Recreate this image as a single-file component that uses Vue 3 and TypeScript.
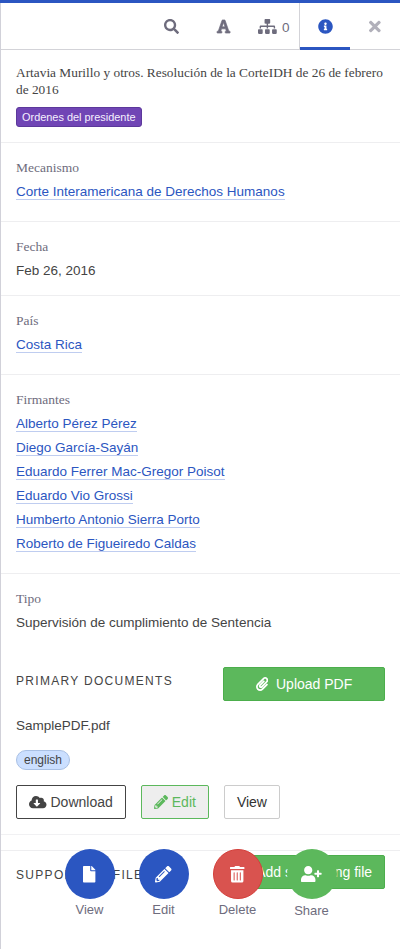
<script setup lang="ts">
interface Icon {
  width: number
  path: string
}

interface Property {
  label: string
  values: string[]
  linked: boolean
}

interface Action {
  label: string
  icon: string
  tone: string
}

const icons: Record<string, Icon> = {
  search: { width: 512, path: 'M505 442.7L405.3 343c-4.5-4.5-10.6-7-17-7H372c27.6-35.3 44-79.7 44-128C416 93.1 322.9 0 208 0S0 93.1 0 208s93.1 208 208 208c48.3 0 92.7-16.4 128-44v16.3c0 6.4 2.5 12.5 7 17l99.7 99.7c9.4 9.4 24.6 9.4 33.9 0l28.3-28.3c9.4-9.4 9.4-24.6.1-34zM208 336c-70.7 0-128-57.2-128-128 0-70.7 57.2-128 128-128 70.7 0 128 57.2 128 128 0 70.7-57.2 128-128 128z' },
  font: { width: 448, path: 'M432 416h-26.7L275.5 42.7c-2.2-6.4-8.3-10.7-15.1-10.7h-72.8c-6.8 0-12.9 4.3-15.1 10.7L42.7 416H16c-8.8 0-16 7.2-16 16v32c0 8.8 7.2 16 16 16h136c8.8 0 16-7.2 16-16v-32c0-8.8-7.2-16-16-16h-24l26.1-80h139.8l26.1 80h-24c-8.8 0-16 7.2-16 16v32c0 8.8 7.2 16 16 16h136c8.8 0 16-7.2 16-16v-32c0-8.8-7.2-16-16-16zM174.4 268.3l42-124.1c4.3-15.2 6.6-28.2 7.6-34.6.8 6.5 2.9 19.5 7.7 34.7l41.3 124H174.4z' },
  sitemap: { width: 640, path: 'M128 352H32c-17.67 0-32 14.33-32 32v96c0 17.67 14.33 32 32 32h96c17.67 0 32-14.33 32-32v-96c0-17.67-14.33-32-32-32zm-24-80h192v48h48v-48h192v48h48v-57.59c0-21.17-17.23-38.41-38.41-38.41H344v-64h40c17.67 0 32-14.33 32-32V32c0-17.67-14.33-32-32-32H256c-17.67 0-32 14.33-32 32v96c0 17.67 14.33 32 32 32h40v64H94.41C73.23 224 56 241.23 56 262.41V320h48v-48zm264 80h-96c-17.67 0-32 14.33-32 32v96c0 17.67 14.33 32 32 32h96c17.67 0 32-14.33 32-32v-96c0-17.67-14.33-32-32-32zm240 0h-96c-17.67 0-32 14.33-32 32v96c0 17.67 14.33 32 32 32h96c17.67 0 32-14.33 32-32v-96c0-17.67-14.33-32-32-32z' },
  info: { width: 512, path: 'M256 8C119.043 8 8 119.083 8 256c0 136.997 111.043 248 248 248s248-111.003 248-248C504 119.083 392.957 8 256 8zm0 110c23.196 0 42 18.804 42 42s-18.804 42-42 42-42-18.804-42-42 18.804-42 42-42zm56 254c0 6.627-5.373 12-12 12h-88c-6.627 0-12-5.373-12-12v-24c0-6.627 5.373-12 12-12h12v-64h-12c-6.627 0-12-5.373-12-12v-24c0-6.627 5.373-12 12-12h64c6.627 0 12 5.373 12 12v100h12c6.627 0 12 5.373 12 12v24z' },
  times: { width: 352, path: 'M242.72 256l100.07-100.07c12.28-12.28 12.28-32.19 0-44.48l-22.24-22.24c-12.28-12.28-32.19-12.28-44.48 0L176 189.28 75.93 89.21c-12.28-12.28-32.19-12.28-44.48 0L9.21 111.45c-12.28 12.28-12.28 32.19 0 44.48L109.28 256 9.21 356.07c-12.28 12.28-12.28 32.19 0 44.48l22.24 22.24c12.28 12.28 32.2 12.28 44.48 0L176 322.72l100.07 100.07c12.28 12.28 32.2 12.28 44.48 0l22.24-22.24c12.28-12.28 12.28-32.19 0-44.48L242.72 256z' },
  paperclip: { width: 448, path: 'M43.246 466.142c-58.43-60.289-57.341-157.511 1.386-217.581L254.392 34c44.316-45.332 116.351-45.336 160.671 0 43.89 44.894 43.943 117.329 0 162.276L232.214 383.128c-29.855 30.537-78.633 30.111-107.982-.998-28.275-29.97-27.368-77.473 1.452-106.953l143.743-146.835c6.182-6.314 16.312-6.422 22.626-.241l22.861 22.379c6.315 6.182 6.422 16.312.241 22.626L171.427 319.927c-4.932 5.045-5.236 13.428-.648 18.292 4.372 4.634 11.245 4.711 15.688.165l182.849-186.851c19.613-20.062 19.613-52.725-.011-72.798-19.189-19.627-49.957-19.637-69.154 0L90.39 293.295c-34.763 35.56-35.299 93.12-1.191 128.313 34.01 35.093 88.985 35.137 123.058.286l172.06-175.999c6.177-6.319 16.307-6.433 22.626-.256l22.877 22.364c6.319 6.177 6.434 16.307.256 22.626l-172.06 175.998c-59.576 60.938-155.943 60.216-214.77-.485z' },
  cloud: { width: 640, path: 'M537.6 226.6c4.1-10.7 6.4-22.4 6.4-34.6 0-53-43-96-96-96-19.7 0-38.1 6-53.3 16.2C367 64.2 315.3 32 256 32c-88.4 0-160 71.6-160 160 0 2.7.1 5.4.2 8.1C40.2 219.8 0 273.2 0 336c0 79.5 64.5 144 144 144h368c70.7 0 128-57.3 128-128 0-61.9-44-113.6-102.4-125.4zm-132.9 88.7L299.3 420.7c-6.2 6.2-16.4 6.2-22.6 0L171.3 315.3c-10.1-10.1-2.9-27.3 11.3-27.3H248V176c0-8.8 7.2-16 16-16h48c8.8 0 16 7.2 16 16v112h65.4c14.2 0 21.4 17.2 11.3 27.3z' },
  pencil: { width: 512, path: 'M497.9 142.1l-46.1 46.1c-4.7 4.7-12.3 4.7-17 0l-111-111c-4.7-4.7-4.7-12.3 0-17l46.1-46.1c18.7-18.7 49.1-18.7 67.9 0l60.1 60.1c18.8 18.7 18.8 49.1 0 67.9zM284.2 99.8L21.6 362.4.4 483.9c-2.9 16.4 11.4 30.6 27.8 27.8l121.5-21.3 262.6-262.6c4.7-4.7 4.7-12.3 0-17l-111-111c-4.8-4.7-12.4-4.7-17.1 0zM124.1 339.9c-5.5-5.5-5.5-14.3 0-19.8l154-154c5.5-5.5 14.3-5.5 19.8 0s5.5 14.3 0 19.8l-154 154c-5.5 5.5-14.3 5.5-19.8 0zM88 424h48v36.3l-64.5 11.3-31.1-31.1L51.7 376H88v48z' },
  file: { width: 384, path: 'M224 136V0H24C10.7 0 0 10.7 0 24v464c0 13.3 10.7 24 24 24h336c13.3 0 24-10.7 24-24V160H248c-13.2 0-24-10.8-24-24zm160-14.1v6.1H256V0h6.1c6.4 0 12.5 2.5 17 7l97.9 98c4.5 4.5 7 10.6 7 16.9z' },
  trash: { width: 448, path: 'M32 464a48 48 0 0 0 48 48h288a48 48 0 0 0 48-48V128H32zm272-256a16 16 0 0 1 32 0v224a16 16 0 0 1-32 0zm-96 0a16 16 0 0 1 32 0v224a16 16 0 0 1-32 0zm-96 0a16 16 0 0 1 32 0v224a16 16 0 0 1-32 0zM432 32H312l-9.4-18.7A24 24 0 0 0 281.1 0H166.8a23.72 23.72 0 0 0-21.4 13.3L136 32H16A16 16 0 0 0 0 48v32a16 16 0 0 0 16 16h416a16 16 0 0 0 16-16V48a16 16 0 0 0-16-16z' },
  userPlus: { width: 640, path: 'M624 208h-64v-64c0-8.8-7.2-16-16-16h-32c-8.8 0-16 7.2-16 16v64h-64c-8.8 0-16 7.2-16 16v32c0 8.8 7.2 16 16 16h64v64c0 8.8 7.2 16 16 16h32c8.8 0 16-7.2 16-16v-64h64c8.8 0 16-7.2 16-16v-32c0-8.8-7.2-16-16-16zm-400 48c70.7 0 128-57.3 128-128S294.7 0 224 0 96 57.3 96 128s57.3 128 128 128zm89.6 32h-16.7c-22.2 10.2-46.9 16-72.9 16s-50.6-5.8-72.9-16h-16.7C60.2 288 0 348.2 0 422.4V464c0 26.5 21.5 48 48 48h352c26.5 0 48-21.5 48-48v-41.6c0-74.2-60.2-134.4-134.4-134.4z' },
}

const box = (name: string): string => `0 0 ${icons[name].width} 512`

const properties: Property[] = [
  { label: 'Mecanismo', values: ['Corte Interamericana de Derechos Humanos'], linked: true },
  { label: 'Fecha', values: ['Feb 26, 2016'], linked: false },
  { label: 'País', values: ['Costa Rica'], linked: true },
  {
    label: 'Firmantes',
    values: [
      'Alberto Pérez Pérez',
      'Diego García-Sayán',
      'Eduardo Ferrer Mac-Gregor Poisot',
      'Eduardo Vio Grossi',
      'Humberto Antonio Sierra Porto',
      'Roberto de Figueiredo Caldas',
    ],
    linked: true,
  },
  { label: 'Tipo', values: ['Supervisión de cumplimiento de Sentencia'], linked: false },
]

const actions: Action[] = [
  { label: 'View', icon: 'file', tone: 'primary' },
  { label: 'Edit', icon: 'pencil', tone: 'primary' },
  { label: 'Delete', icon: 'trash', tone: 'danger' },
  { label: 'Share', icon: 'userPlus', tone: 'share' },
]
</script>

<template>
  <div class="page">
    <aside class="panel">
      <nav class="tabs">
        <button class="tab search"><svg class="icon" :viewBox="box('search')"><path :d="icons.search.path" /></svg></button>
        <button class="tab text"><svg class="icon" :viewBox="box('font')"><path :d="icons.font.path" /></svg></button>
        <button class="tab relations">
          <svg class="icon" :viewBox="box('sitemap')"><path :d="icons.sitemap.path" /></svg>
          <span class="count">0</span>
        </button>
        <button class="tab active"><svg class="icon" :viewBox="box('info')"><path :d="icons.info.path" /></svg></button>
        <button class="tab close"><svg class="icon" :viewBox="box('times')"><path :d="icons.times.path" /></svg></button>
      </nav>

      <header class="heading">
        <h1>Artavia Murillo y otros. Resolución de la CorteIDH de 26 de febrero de 2016</h1>
        <span class="type">Ordenes del presidente</span>
      </header>

      <dl class="properties">
        <div v-for="item in properties" :key="item.label" class="property" :class="{ linked: item.linked }">
          <dt>{{ item.label }}</dt>
          <dd v-for="value in item.values" :key="value">
            <a v-if="item.linked">{{ value }}</a>
            <template v-else>{{ value }}</template>
          </dd>
        </div>
      </dl>

      <section class="documents">
        <div class="section-head">
          <h2>Primary Documents</h2>
          <button class="btn success wide">
            <svg class="icon" :viewBox="box('paperclip')"><path :d="icons.paperclip.path" /></svg>
            <span>Upload PDF</span>
          </button>
        </div>
        <div class="filename">SamplePDF.pdf</div>
        <span class="language">english</span>
        <div class="file-actions">
          <button class="btn dark">
            <svg class="icon" :viewBox="box('cloud')"><path :d="icons.cloud.path" /></svg>
            <span>Download</span>
          </button>
          <button class="btn outline">
            <svg class="icon" :viewBox="box('pencil')"><path :d="icons.pencil.path" /></svg>
            <span>Edit</span>
          </button>
          <button class="btn">View</button>
        </div>
      </section>

      <section class="supporting">
        <div class="section-head">
          <h2>Supporting files</h2>
          <button class="btn success wide">
            <svg class="icon" :viewBox="box('paperclip')"><path :d="icons.paperclip.path" /></svg>
            <span>Add supporting file</span>
          </button>
        </div>
      </section>
    </aside>

    <footer class="actions">
      <div v-for="action in actions" :key="action.label" class="action" :class="action.tone">
        <button class="round"><svg class="icon" :viewBox="box(action.icon)"><path :d="icons[action.icon].path" /></svg></button>
        <span class="caption">{{ action.label }}</span>
      </div>
    </footer>
  </div>
</template>

<style>
body {
  margin: 0;
  background: #fff;
}
</style>

<style scoped>
.page,
.page * {
  box-sizing: border-box;
}
.page {
  position: relative;
  height: 949px;
  overflow: hidden;
  border-top: 3px solid #2b56c1;
  background: #fff;
  color: #444;
  font-family: 'Liberation Sans', Arial, sans-serif;
  font-size: 13.5px;
}
.panel {
  height: 100%;
  border-left: 1px solid #d1d1d9;
}
button {
  margin: 0;
  padding: 0;
  border: 0;
  background: none;
  font: inherit;
  color: inherit;
}
.icon {
  display: block;
  flex: none;
  height: 1em;
  fill: currentColor;
}
.tabs {
  display: flex;
  justify-content: flex-end;
  height: 47px;
  border-bottom: 1px solid #d3d3d8;
  color: #6e6c7d;
  font-size: 15px;
}
.tab {
  display: flex;
  align-items: center;
  justify-content: center;
  width: 50px;
  height: 47px;
}
.search {
  width: 51px;
}
.text {
  width: 54px;
}
.text .icon {
  overflow: visible;
  stroke: currentColor;
  stroke-width: 22px;
}
.relations {
  gap: 5px;
  width: 48px;
  padding-right: 2px;
}
.count {
  padding-top: 2px;
  font-size: 13.5px;
}
.active {
  width: 51px;
  border-left: 1px solid #d3d3d8;
  color: #2b56c1;
  box-shadow: inset 0 -3px #2b56c1;
}
.close {
  padding-bottom: 1px;
  color: #b1b0ba;
  font-size: 17px;
}
.heading {
  height: 93px;
  padding: 14px 15px 0;
  border-bottom: 1px solid #eeeef0;
}
h1 {
  margin: 0;
  font: 13.35px/17px 'Liberation Serif', 'Times New Roman', serif;
}
.type {
  display: block;
  width: 126px;
  height: 20px;
  margin-top: 9px;
  padding: 0 5px;
  border: 1px solid #5c389b;
  border-radius: 3px;
  background: #7045b5;
  color: #f5f0ff;
  font-size: 10.93px;
  line-height: 18px;
  white-space: nowrap;
}
.properties {
  margin: 0;
}
.property {
  padding: 13px 15px 12px;
  border-bottom: 1px solid #eeeef0;
}
.property.linked {
  padding-bottom: 17px;
}
.property:last-child {
  border-bottom: 0;
}
dt {
  height: 24px;
  color: #6e6c7d;
  font: 13.5px/24px 'Liberation Serif', 'Times New Roman', serif;
}
dd {
  height: 24px;
  margin: 0;
  line-height: 24px;
}
a {
  border-bottom: 1px solid #bfcdf0;
  color: #2b56c1;
}
.documents {
  height: 188px;
  padding: 20px 15px 0;
  border-bottom: 1px solid #f1f1f3;
}
.section-head {
  display: flex;
  justify-content: space-between;
  height: 34px;
}
h2 {
  margin: 0;
  font-size: 12px;
  font-weight: 400;
  line-height: 28px;
  letter-spacing: 1.3px;
  text-transform: uppercase;
  white-space: nowrap;
}
.btn {
  display: flex;
  align-items: center;
  justify-content: center;
  gap: 4px;
  height: 34px;
  padding: 0 12px;
  border: 1px solid #ccc;
  border-radius: 2px;
  background: #fff;
  color: #333;
  font-size: 14px;
  white-space: nowrap;
}
.success {
  border-color: #4cae4c;
  background: #5cb85c;
  color: #fff;
}
.wide {
  gap: 8px;
  width: 162px;
}
.dark {
  border-color: #444;
  color: #444;
}
.outline {
  border-color: #5cb85c;
  background: #eee;
  color: #5cb85c;
}
.filename {
  margin-top: 13px;
  line-height: 24px;
}
.language {
  display: block;
  width: max-content;
  height: 20px;
  margin-top: 12px;
  padding: 0 7px;
  border: 1px solid #a9c0e4;
  border-radius: 10px;
  background: #cbdfff;
  font-size: 12px;
  line-height: 18px;
}
.file-actions {
  display: flex;
  gap: 15px;
  margin-top: 15px;
}
.supporting {
  margin-top: 15px;
  padding: 4px 15px 0;
  border-top: 1px solid #eeeef0;
}
.supporting h2 {
  line-height: 40px;
}
.actions {
  position: absolute;
  top: 846px;
  left: 65px;
  display: flex;
  gap: 24px;
}
.action {
  display: flex;
  flex-direction: column;
  align-items: center;
  width: 50px;
  color: #6e6c7d;
}
.round {
  display: flex;
  align-items: center;
  justify-content: center;
  width: 50px;
  height: 50px;
  padding: 1px 1px 0 0;
  border-radius: 50%;
  background: #2b56c1;
  color: #fff;
  font-size: 16.5px;
}
.danger .round {
  border: 1px solid #d43f3a;
  background: #d9534f;
}
.share .round {
  padding-top: 0;
  background: #5cb85c;
}
.caption {
  margin-top: 3px;
  padding-right: 1px;
  font-size: 13px;
  line-height: 16px;
}
.share .caption {
  margin-top: 4px;
}
</style>
